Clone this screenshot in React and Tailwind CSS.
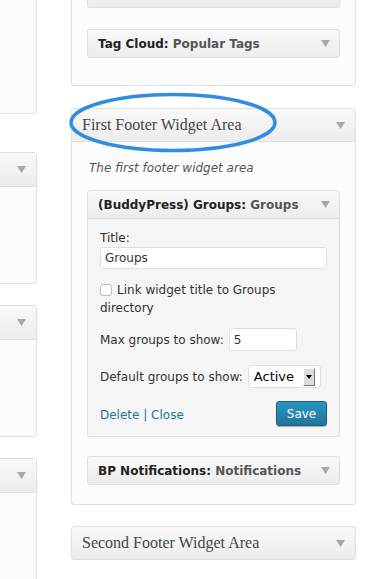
import React from 'react';

const Arrow = ({ className = '' }) => (
  <svg width="9" height="7" viewBox="0 0 9 7" className={className}>
    <path d="M0 0 H9 L4.5 7 Z" fill="#a8a8a8" />
  </svg>
);

const WidgetTop = ({ title, sub, open }) => (
  <div
    className={`h-[29px] border border-[#dfdfdf] bg-gradient-to-b from-[#f9f9f9] to-[#ececec] flex items-center pl-[10px] pr-[9px] ${
      open ? 'rounded-t-[3px]' : 'rounded-[3px]'
    }`}
  >
    {title && (
      <span className="text-[12px] font-bold text-[#222] leading-none">
        {title}: <span className="text-[#555]">{sub}</span>
      </span>
    )}
    <Arrow className="ml-auto" />
  </div>
);

const LeftPanel = ({ height, withHeader = true, className = '' }) => (
  <div
    className={`border border-[#dfdfdf] rounded-[3px] bg-[#fcfcfc] flex flex-col ${className}`}
    style={{ height }}
  >
    {withHeader && (
      <div className="h-[34px] shrink-0 border-b border-[#dfdfdf] bg-gradient-to-b from-[#f9f9f9] to-[#ececec] flex items-center justify-end pr-[10px]">
        <Arrow />
      </div>
    )}
  </div>
);

const App = () => {
  return (
    <div className="relative w-[376px] h-[579px] overflow-hidden bg-white flex font-['DejaVu_Sans',sans-serif] text-[#333]">
      {/* left column, mostly cut off */}
      <div className="w-[37px] shrink-0 overflow-hidden">
        <div className="w-[200px] ml-[-163px] flex flex-col">
          <LeftPanel height={150} withHeader={false} className="mt-[-36px]" />
          <LeftPanel height={132} className="mt-[38px]" />
          <LeftPanel height={132} className="mt-[21px]" />
          <LeftPanel height={160} className="mt-[21px]" />
        </div>
      </div>

      {/* middle column */}
      <div className="ml-[34px] w-[285px] shrink-0 flex flex-col">
        <div className="h-[137px] mt-[-51px] border border-[#dfdfdf] rounded-[3px] bg-[#fcfcfc] px-[15px] pt-[29px]">
          <WidgetTop />
          <div className="mt-[21px]">
            <WidgetTop title="Tag Cloud" sub="Popular Tags" />
          </div>
        </div>

        <div className="mt-[22px] border border-[#dfdfdf] rounded-[3px] bg-[#fcfcfc]">
          <div className="h-[33px] border-b border-[#dfdfdf] bg-gradient-to-b from-[#f9f9f9] to-[#ececec] flex items-center pl-[10px] pr-[10px]">
            <span className="font-['Liberation_Serif',serif] text-[16px] text-[#464646]">First Footer Widget Area</span>
            <Arrow className="ml-auto" />
          </div>
          <div className="px-[15px] pb-[19px]">
            <p className="mt-[17px] mb-[13px] pl-[2px] text-[12px] leading-[18px] italic text-[#555]">
              The first footer widget area
            </p>

            <div className="rounded-[3px]">
              <WidgetTop title="(BuddyPress) Groups" sub="Groups" open />
              <div className="border border-t-0 border-[#dfdfdf] rounded-b-[3px] bg-[#f5f5f5] px-[12px] pt-[10px] pb-[10px] text-[12px] leading-[18px] text-[#333]">
                <div>Title:</div>
                <div className="h-[22px] border border-[#dfdfdf] rounded-[3px] bg-white flex items-center px-[4px] text-[12px]">
                  Groups
                </div>
                <div className="mt-[12px] flex items-start">
                  <span className="mt-[3px] w-[12px] h-[12px] shrink-0 border border-[#bbb] rounded-[3px] bg-white" />
                  <span className="ml-[5px]">Link widget title to Groups</span>
                </div>
                <div>directory</div>
                <div className="mt-[11px] flex items-center">
                  <span>Max groups to show:</span>
                  <span className="ml-[5px] w-[68px] h-[23px] border border-[#dfdfdf] rounded-[3px] bg-white flex items-center px-[4px]">5</span>
                </div>
                <div className="mt-[14px] flex items-center">
                  <span>Default groups to show:</span>
                  <span className="ml-[5px] w-[73px] h-[23px] border border-[#dfdfdf] rounded-[3px] bg-white flex items-center pl-[5px] pr-[5px] text-[13px] text-black">
                    Active
                    <span className="ml-auto w-[12px] h-[18px] bg-[#dcdcdc] border-t border-l border-white border-r border-b border-r-[#777] border-b-[#777] flex items-center justify-center">
                      <svg width="6" height="4" viewBox="0 0 6 4">
                        <path d="M0 0 H6 L3 4 Z" fill="#000" />
                      </svg>
                    </span>
                  </span>
                </div>
                <div className="mt-[13px] flex items-start">
                  <span className="mt-[5px] text-[#21759b]">
                    Delete <span className="text-[#21759b]">|</span> Close
                  </span>
                  <button className="ml-auto w-[51px] h-[25px] rounded-[3px] border border-[#1b607f] bg-gradient-to-b from-[#2a95c5] to-[#21759b] text-white text-[12px] shadow-[0_1px_1px_rgba(0,0,0,0.3)] font-['DejaVu_Sans',sans-serif]">
                    Save
                  </button>
                </div>
              </div>
            </div>

            <div className="mt-[19px]">
              <WidgetTop title="BP Notifications" sub="Notifications" />
            </div>
          </div>
        </div>

        <div className="mt-[21px] h-[34px] border border-[#dfdfdf] rounded-[3px] bg-gradient-to-b from-[#f9f9f9] to-[#ececec] flex items-center pl-[10px] pr-[10px]">
          <span className="font-['Liberation_Serif',serif] text-[16px] text-[#464646]">Second Footer Widget Area</span>
          <Arrow className="ml-auto" />
        </div>
      </div>

      {/* highlight drawn over the screenshot */}
      <svg className="absolute left-0 top-0 pointer-events-none" width="376" height="579">
        <ellipse cx="173" cy="122.5" rx="102" ry="28" fill="none" stroke="#318ede" strokeWidth="3.5" />
      </svg>
    </div>
  );
};

export default App;
